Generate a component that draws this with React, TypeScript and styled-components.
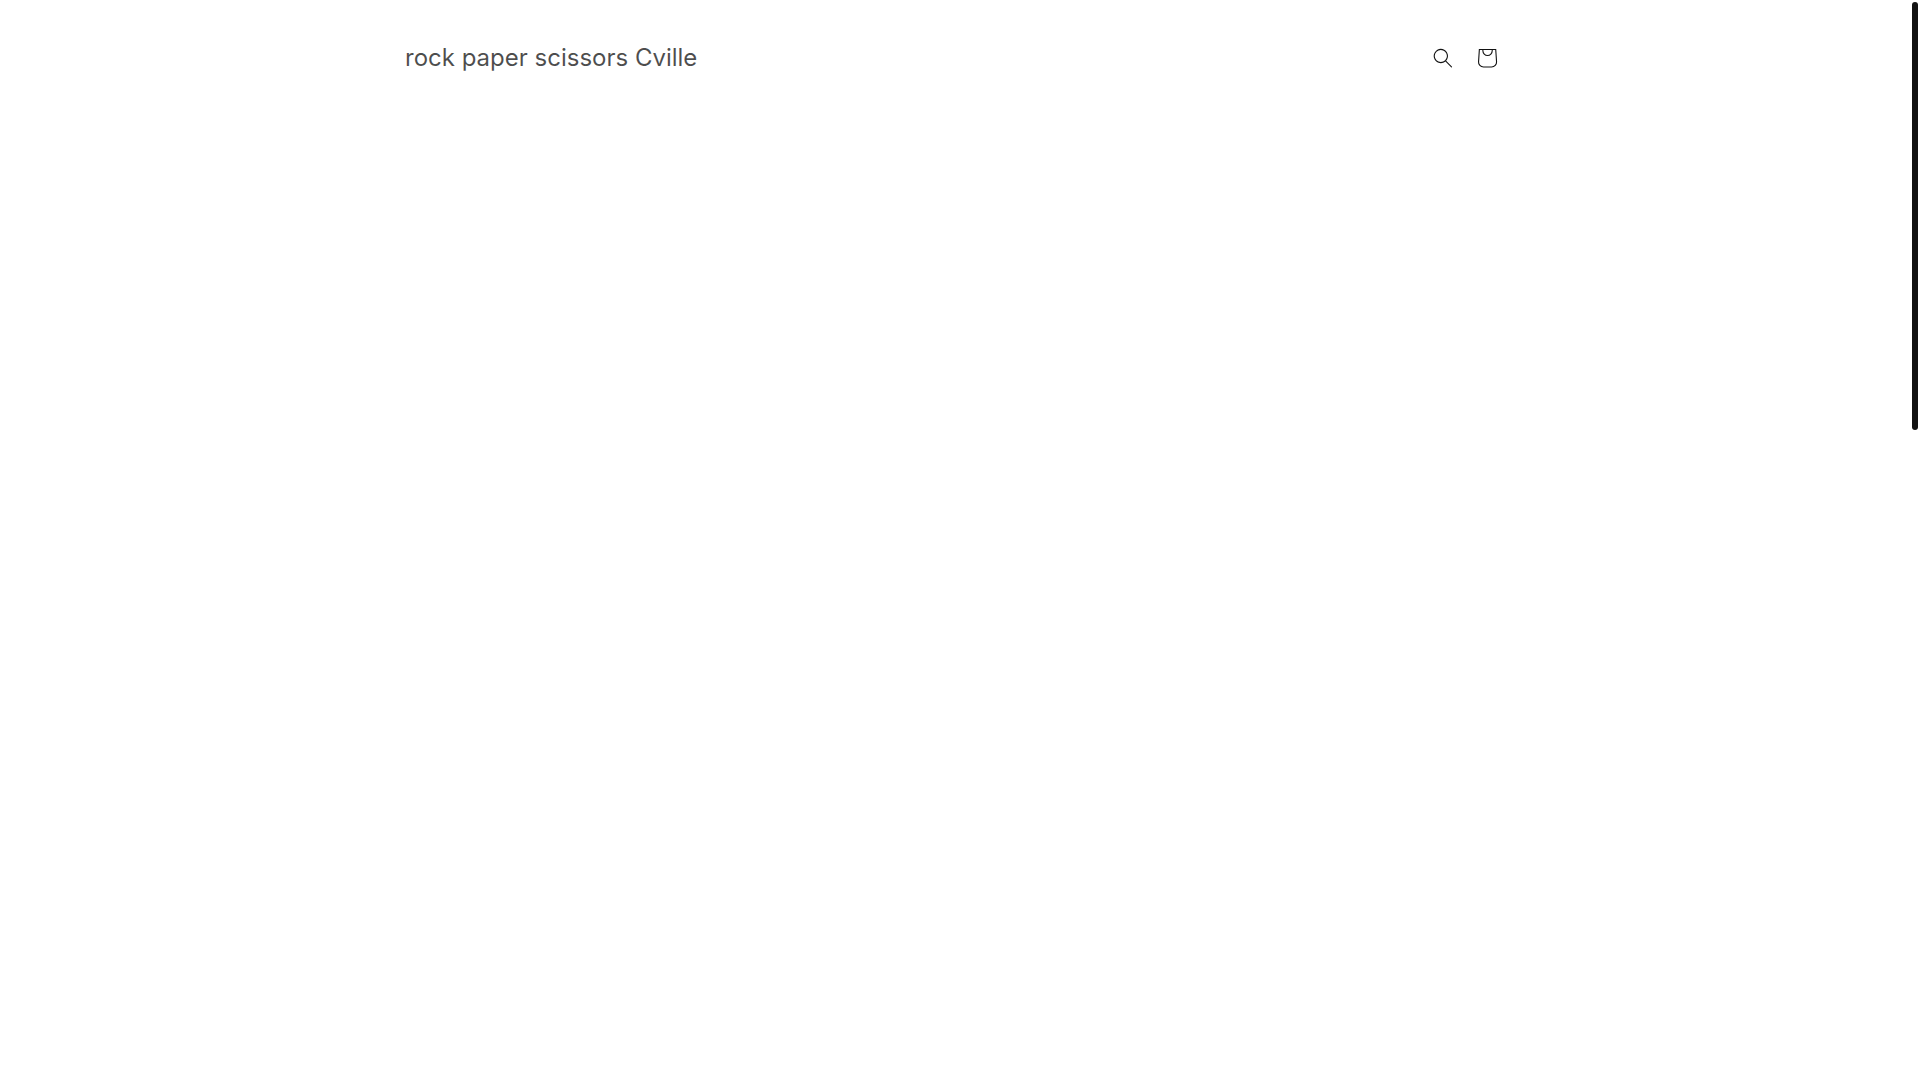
import React from "react";
import styled, { createGlobalStyle } from "styled-components";

const GlobalStyle = createGlobalStyle`
  *, *::before, *::after {
    box-sizing: border-box;
  }
  body {
    margin: 0;
    min-height: 100vh;
    background: #ffffff;
    color: #121212;
    font-family: Inter, "Liberation Sans", sans-serif;
  }
`;

const Header = styled.header`
  display: flex;
  align-items: center;
  justify-content: space-between;
  width: 100%;
  max-width: 1200px;
  margin: 0 auto;
  padding: 36px 51px 36px 45px;
`;

const Title = styled.h1`
  margin: 0;
  font-size: 24px;
  font-weight: 400;
  line-height: 32px;
`;

const TitleLink = styled.a`
  color: rgba(18, 18, 18, 0.75);
  text-decoration: none;
`;

const Actions = styled.div`
  display: flex;
`;

const SearchButton = styled.button`
  display: flex;
  align-items: center;
  justify-content: center;
  width: 44px;
  height: 44px;
  padding: 0;
  border: 0;
  background: transparent;
  color: #121212;
  cursor: pointer;
`;

const CartLink = styled.a`
  display: flex;
  width: 44px;
  height: 44px;
  color: #121212;
`;

const Icon = styled.svg<{ $size: number }>`
  display: block;
  width: ${({ $size }) => $size}px;
  height: ${({ $size }) => $size}px;
  fill: currentColor;
`;

const ScrollRail = styled.div`
  position: fixed;
  top: 0;
  right: 0;
  bottom: 0;
  padding: 2px;
`;

const ScrollThumb = styled.div`
  width: 6px;
  height: calc(40% - 2px);
  border-radius: 3px;
  background: #121212;
`;

export default function App() {
  return (
    <>
      <GlobalStyle />
      <Header>
        <Title>
          <TitleLink href="/">rock paper scissors Cville</TitleLink>
        </Title>
        <Actions>
          <SearchButton type="button" aria-label="Search">
            <Icon $size={20} viewBox="0 0 18 19" aria-hidden="true">
              <path
                fillRule="evenodd"
                clipRule="evenodd"
                d="M11.03 11.68A5.784 5.784 0 112.85 3.5a5.784 5.784 0 018.18 8.18zm.26 1.12a6.78 6.78 0 11.72-.7l5.4 5.4a.5.5 0 11-.71.7l-5.41-5.4z"
              />
            </Icon>
          </SearchButton>
          <CartLink href="/cart" aria-label="Cart">
            <Icon $size={44} viewBox="0 0 40 40" aria-hidden="true">
              <path
                fillRule="evenodd"
                d="M15.75 11.8h-3.16l-.77 11.6a5 5 0 0 0 4.99 5.34h7.38a5 5 0 0 0 4.99-5.33L28.4 11.8zm0 1h-2.22l-.71 10.67a4 4 0 0 0 3.99 4.27h7.38a4 4 0 0 0 4-4.27l-.72-10.67h-2.22v.63a4.75 4.75 0 1 1-9.5 0zm8.5 0h-7.5v.63a3.75 3.75 0 1 0 7.5 0z"
              />
            </Icon>
          </CartLink>
        </Actions>
      </Header>
      <ScrollRail aria-hidden="true">
        <ScrollThumb />
      </ScrollRail>
    </>
  );
}
